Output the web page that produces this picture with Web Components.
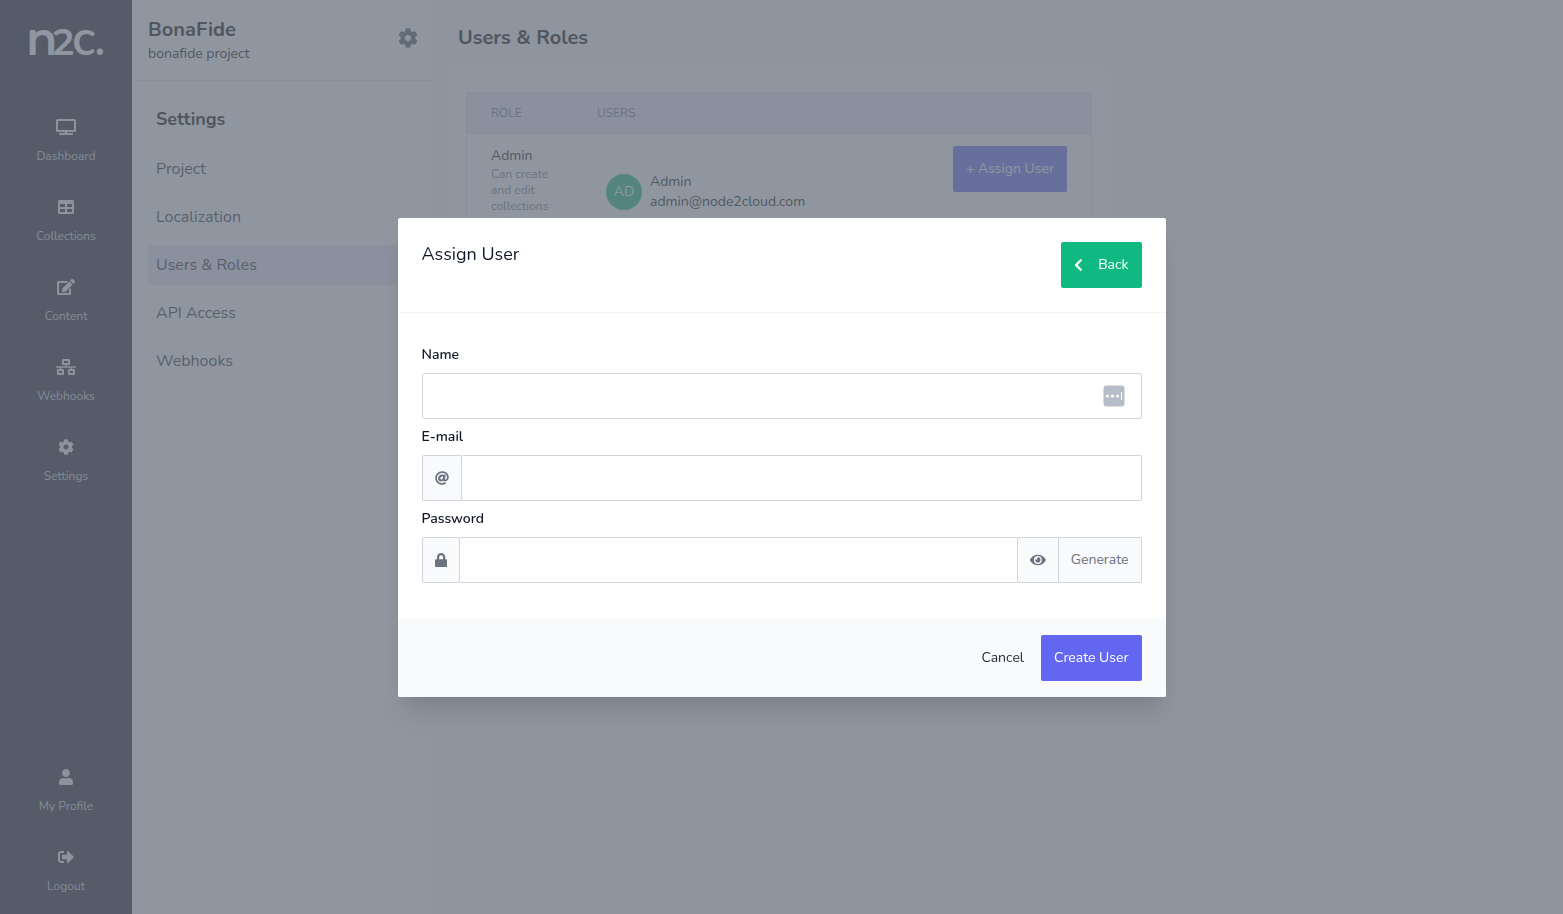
<!DOCTYPE html>
<html lang="en">
<head>
<meta charset="utf-8">
<meta name="viewport" content="width=device-width, initial-scale=1">
<title>Users &amp; Roles – BonaFide</title>
<style>
  body { margin: 0; font: 14px/20px Nunito, "Nunito Sans", Lato, Roboto, sans-serif; color: #000; background: #f9fafb; }
</style>
</head>
<body>
<app-shell>
  <main-menu slot="menu">
    <menu-item icon="tv">Dashboard</menu-item>
    <menu-item icon="table">Collections</menu-item>
    <menu-item icon="edit">Content</menu-item>
    <menu-item icon="network">Webhooks</menu-item>
    <menu-item icon="cog">Settings</menu-item>
    <menu-item slot="bottom" icon="user">My Profile</menu-item>
    <menu-item slot="bottom" icon="logout">Logout</menu-item>
  </main-menu>
  <project-panel slot="panel">
    <span slot="name">BonaFide</span>
    <span slot="description">bonafide project</span>
    <span slot="section">Settings</span>
    <panel-link>Project</panel-link>
    <panel-link>Localization</panel-link>
    <panel-link active>Users &amp; Roles</panel-link>
    <panel-link>API Access</panel-link>
    <panel-link>Webhooks</panel-link>
  </project-panel>
  <roles-page></roles-page>
</app-shell>
<modal-dialog>
  <span slot="title">Assign User</span>
  <app-button slot="action" variant="success" icon="chevron">Back</app-button>
  <form-field label="Name" type="text" manager></form-field>
  <form-field label="E-mail" type="email" prefix="at"></form-field>
  <form-field label="Password" type="password" prefix="lock" generate></form-field>
  <app-button slot="footer" variant="plain">Cancel</app-button>
  <app-button slot="footer" variant="primary">Create User</app-button>
</modal-dialog>
<script>
const ICONS = {
  tv: [640, 'M592 0H48A48 48 0 0 0 0 48v320a48 48 0 0 0 48 48h240v32H112a16 16 0 0 0-16 16v32a16 16 0 0 0 16 16h416a16 16 0 0 0 16-16v-32a16 16 0 0 0-16-16H352v-32h240a48 48 0 0 0 48-48V48a48 48 0 0 0-48-48zm-16 352H64V64h512z'],
  table: [512, 'M464 32H48C21.49 32 0 53.49 0 80v352c0 26.51 21.49 48 48 48h416c26.51 0 48-21.49 48-48V80c0-26.51-21.49-48-48-48zM224 416H64v-96h160v96zm0-160H64v-96h160v96zm224 160H288v-96h160v96zm0-160H288v-96h160v96z'],
  edit: [576, 'M402.6 83.2l90.2 90.2c3.8 3.8 3.8 10 0 13.8L274.4 405.6l-92.8 10.3c-12.4 1.4-22.9-9.1-21.5-21.5l10.3-92.8L388.8 83.2c3.8-3.8 10-3.8 13.8 0zm162-22.9l-48.8-48.8c-15.2-15.2-39.9-15.2-55.2 0l-35.4 35.4c-3.8 3.8-3.8 10 0 13.8l90.2 90.2c3.8 3.8 10 3.8 13.8 0l35.4-35.4c15.2-15.3 15.2-40 0-55.2zM384 346.2V448H64V128h229.8c3.2 0 6.2-1.3 8.5-3.5l40-40c7.6-7.6 2.2-20.5-8.5-20.5H48C21.5 64 0 85.5 0 112v352c0 26.5 21.5 48 48 48h352c26.5 0 48-21.5 48-48V306.2c0-10.7-12.9-16-20.5-8.5l-40 40c-2.2 2.3-3.5 5.3-3.5 8.5z'],
  network: [640, 'M640 264v-16c0-8.84-7.16-16-16-16H344v-40h72c17.67 0 32-14.33 32-32V32c0-17.67-14.33-32-32-32H224c-17.67 0-32 14.33-32 32v128c0 17.67 14.33 32 32 32h72v40H16c-8.84 0-16 7.16-16 16v16c0 8.84 7.16 16 16 16h104v40H64c-17.67 0-32 14.33-32 32v128c0 17.67 14.33 32 32 32h160c17.67 0 32-14.33 32-32V352c0-17.67-14.33-32-32-32h-56v-40h304v40h-56c-17.67 0-32 14.33-32 32v128c0 17.67 14.33 32 32 32h160c17.67 0 32-14.33 32-32V352c0-17.67-14.33-32-32-32h-56v-40h104c8.84 0 16-7.16 16-16zM256 128V64h128v64H256zm-64 320H96v-64h96v64zm352 0h-96v-64h96v64z'],
  cog: [512, 'M487.4 315.7l-42.6-24.6c4.3-23.2 4.3-47 0-70.2l42.6-24.6c4.9-2.8 7.1-8.6 5.5-14-11.1-35.6-30-67.8-54.7-94.6-3.8-4.1-10-5.1-14.8-2.3L380.8 110c-17.9-15.4-38.5-27.3-60.8-35.1V25.8c0-5.6-3.9-10.5-9.4-11.7-36.7-8.2-74.3-7.8-109.2 0-5.5 1.2-9.4 6.1-9.4 11.7V75c-22.2 7.9-42.8 19.8-60.8 35.1L88.7 85.5c-4.9-2.8-11-1.9-14.8 2.3-24.7 26.7-43.6 58.9-54.7 94.6-1.7 5.4.6 11.2 5.5 14L67.3 221c-4.3 23.2-4.3 47 0 70.2l-42.6 24.6c-4.9 2.8-7.1 8.6-5.5 14 11.1 35.6 30 67.8 54.7 94.6 3.8 4.1 10 5.1 14.8 2.3l42.6-24.6c17.9 15.4 38.5 27.3 60.8 35.1v49.2c0 5.6 3.9 10.5 9.4 11.7 36.7 8.2 74.3 7.8 109.2 0 5.5-1.2 9.4-6.1 9.4-11.7v-49.2c22.2-7.9 42.8-19.8 60.8-35.1l42.6 24.6c4.9 2.8 11 1.9 14.8-2.3 24.7-26.7 43.6-58.9 54.7-94.6 1.5-5.5-.7-11.3-5.6-14.1zM256 336c-44.1 0-80-35.9-80-80s35.9-80 80-80 80 35.9 80 80-35.9 80-80 80z'],
  user: [448, 'M224 256c70.7 0 128-57.3 128-128S294.7 0 224 0 96 57.3 96 128s57.3 128 128 128zm89.6 32h-16.7c-22.2 10.2-46.9 16-72.9 16s-50.6-5.8-72.9-16h-16.7C60.2 288 0 348.2 0 422.4V464c0 26.5 21.5 48 48 48h352c26.5 0 48-21.5 48-48v-41.6c0-74.2-60.2-134.4-134.4-134.4z'],
  logout: [512, 'M497 273L329 441c-15 15-41 4.5-41-17v-96H152c-13.3 0-24-10.7-24-24v-96c0-13.3 10.7-24 24-24h136V88c0-21.4 25.9-32 41-17l168 168c9.3 9.4 9.3 24.6 0 34zM192 436v-40c0-6.6-5.4-12-12-12H96c-17.7 0-32-14.3-32-32V160c0-17.7 14.3-32 32-32h84c6.6 0 12-5.4 12-12V76c0-6.6-5.4-12-12-12H96c-53 0-96 43-96 96v192c0 53 43 96 96 96h84c6.6 0 12-5.4 12-12z'],
  chevron: [320, 'M34.52 239.03L228.87 44.69c9.37-9.37 24.57-9.37 33.94 0l22.67 22.67c9.36 9.36 9.37 24.52.04 33.9L131.49 256l154.02 154.75c9.34 9.38 9.32 24.54-.04 33.9l-22.67 22.67c-9.37 9.37-24.57 9.37-33.94 0L34.52 272.97c-9.37-9.37-9.37-24.57 0-33.94z'],
  at: [512, 'M256 8C118.941 8 8 118.919 8 256c0 137.059 110.919 248 248 248 48.154 0 95.342-14.14 135.408-40.223 12.005-7.815 14.625-24.288 5.552-35.372l-10.177-12.433c-7.671-9.371-21.179-11.667-31.373-5.129C325.92 429.757 291.314 440 256 440c-101.458 0-184-82.542-184-184S154.542 72 256 72c100.139 0 184 57.619 184 160 0 38.786-21.093 79.742-58.17 83.693-17.349-.454-16.91-12.857-13.476-30.024l23.433-121.11C394.653 149.75 383.308 136 368.225 136h-44.981a13.518 13.518 0 0 0-13.432 11.993l-.01.092c-14.697-17.901-40.448-21.775-59.971-21.775-74.58 0-137.831 62.234-137.831 151.46 0 65.303 36.785 105.87 96 105.87 26.984 0 57.369-15.637 74.991-38.333 9.522 34.104 40.613 34.104 70.71 34.104C462.609 379.41 504 307.798 504 232 504 95.653 394.023 8 256 8zm-21.68 304.43c-22.249 0-36.07-15.623-36.07-40.771 0-44.993 30.779-72.729 58.63-72.729 22.292 0 35.601 15.241 35.601 40.77 0 45.061-33.875 72.73-58.161 72.73z'],
  lock: [448, 'M400 224h-24v-72C376 68.2 307.8 0 224 0S72 68.2 72 152v72H48c-26.5 0-48 21.5-48 48v192c0 26.5 21.5 48 48 48h352c26.5 0 48-21.5 48-48V272c0-26.5-21.5-48-48-48zm-104 0H152v-72c0-39.7 32.3-72 72-72s72 32.3 72 72v72z'],
  eye: [576, 'M572.52 241.4C518.29 135.59 410.93 64 288 64S57.68 135.64 3.48 241.41a32.35 32.35 0 0 0 0 29.19C57.71 376.41 165.07 448 288 448s230.32-71.64 284.52-177.41a32.35 32.35 0 0 0 0-29.19zM288 400a144 144 0 1 1 144-144 143.93 143.93 0 0 1-144 144zm0-240a95.31 95.31 0 0 0-25.31 3.79 47.85 47.85 0 0 1-66.9 66.9A95.78 95.78 0 1 0 288 160z']
};

/* Registers an element whose shadow root is filled from a template string. */
function define(tag, render) {
  customElements.define(tag, class extends HTMLElement {
    connectedCallback() {
      if (this.shadowRoot) return;
      const template = document.createElement('template');
      template.innerHTML = render(this);
      this.attachShadow({ mode: 'open' }).append(template.content.cloneNode(true));
    }
  });
}

define('app-icon', el => {
  const [width, path] = ICONS[el.getAttribute('name')];
  return `
  <style>
    :host { display: inline-flex; height: var(--icon-size, 16px); }
    svg { display: block; height: 100%; fill: currentColor; }
  </style>
  <svg viewBox="0 0 ${width} 512" aria-hidden="true"><path d="${path}"/></svg>`;
});

define('app-shell', () => `
  <style>
    :host { display: grid; grid-template-columns: 132px 302px minmax(0, 1fr); min-height: 100vh; }
    ::slotted(*) { min-width: 0; }
  </style>
  <slot name="menu"></slot><slot name="panel"></slot><slot></slot>`);

define('brand-logo', () => `
  <style>
    :host { display: block; }
    svg { display: block; overflow: visible; }
    text { fill: #fff; font-family: Montserrat, Nunito, Lato, sans-serif; font-weight: 600; font-size: 46px; }
    .digit { font-size: 36px; }
    .round { font-family: Nunito, Lato, sans-serif; font-size: 50px; }
  </style>
  <svg width="80" height="64" role="img" aria-label="n2c.">
    <text y="47"><tspan x="0">n</tspan><tspan x="27" class="digit">2</tspan><tspan x="46" class="round">c</tspan><tspan x="68" class="round">.</tspan></text>
  </svg>`);

define('main-menu', () => `
  <style>
    :host { display: flex; flex-direction: column; background: #1a1427; padding: 8px 0 3px; box-sizing: border-box; }
    brand-logo { align-self: center; }
    nav { display: flex; flex-direction: column; }
    .top { padding-top: 29px; flex: 1; }
  </style>
  <brand-logo></brand-logo>
  <nav class="top" aria-label="Main"><slot></slot></nav>
  <nav aria-label="Account"><slot name="bottom"></slot></nav>`);

define('menu-item', el => `
  <style>
    :host { display: block; }
    a { display: flex; flex-direction: column; align-items: center; gap: 10px; padding: 16px 8px;
        color: #d1d5db; text-decoration: none; font-size: 12px; line-height: 18px; }
    .icon { display: flex; align-items: center; height: 20px; color: #f3f4f6; }
  </style>
  <a href="#"><span class="icon"><app-icon name="${el.getAttribute('icon')}"></app-icon></span><slot></slot></a>`);

define('project-panel', () => `
  <style>
    :host { display: block; background: #fff; }
    header { display: flex; align-items: flex-start; justify-content: space-between; padding: 16px; border-bottom: 1px solid #e5e7eb; }
    h1, h2, p { margin: 0; }
    h1 { font-size: 20px; line-height: 28px; }
    h2 { font-size: 18px; line-height: 28px; padding: 0 8px 8px; }
    button { display: flex; border: 0; padding: 12px 0; background: none; color: #4b5563; --icon-size: 20px; }
    nav { display: flex; flex-direction: column; gap: 8px; padding: 24px 16px; }
  </style>
  <header>
    <div><h1><slot name="name"></slot></h1><p><slot name="description"></slot></p></div>
    <button aria-label="Project settings"><app-icon name="cog"></app-icon></button>
  </header>
  <nav aria-label="Settings"><h2><slot name="section"></slot></h2><slot></slot></nav>`);

define('panel-link', () => `
  <style>
    :host { display: block; border-radius: 4px; }
    :host([active]) { background: #ece6f5; }
    a { display: block; padding: 8px; font-size: 16px; line-height: 24px; color: #1f2937; text-decoration: none; }
  </style>
  <a href="#"><slot></slot></a>`);

define('app-button', el => `
  <style>
    :host { display: inline-block; }
    button { display: flex; align-items: center; gap: 15px; margin: 0; padding: 12px; border: 1px solid transparent; border-radius: 2px;
             font: inherit; font-size: 14px; line-height: 20px; color: #fff; white-space: nowrap; cursor: pointer; --icon-size: 14px; }
    .primary { background: #6366f1; }
    .success { background: #10b981; }
    .plain { background: none; color: #1f2937; }
  </style>
  <button type="button" class="${el.getAttribute('variant')}">${el.hasAttribute('icon') ? `<app-icon name="${el.getAttribute('icon')}"></app-icon>` : ''}<slot></slot></button>`);

define('user-chip', el => `
  <style>
    :host { display: inline-flex; align-items: center; gap: 8px; padding: 8px; border: 1px solid #f3f4f6; border-radius: 2px; }
    .avatar { display: flex; align-items: center; justify-content: center; width: 36px; height: 36px; border-radius: 50%; background: #10b981; color: #fff; }
    .mail { display: block; }
  </style>
  <span class="avatar">${el.getAttribute('initials')}</span>
  <span><slot></slot><span class="mail"><slot name="mail"></slot></span></span>`);

define('roles-page', () => `
  <style>
    :host { display: block; padding: 24px 16px; }
    h1 { margin: 0 0 16px; padding: 0 8px; font-size: 20px; line-height: 28px; }
    section { box-sizing: border-box; max-width: 658px; padding: 24px 16px; background: #fff; border-radius: 4px; }
    table { width: 100%; border-collapse: separate; border-spacing: 0; border: 1px solid #e2deea; }
    th { padding: 12px 24px; background: #ece6f5; border-bottom: 1px solid #e2deea; text-align: left;
         font-size: 12px; line-height: 16px; font-weight: 400; color: #6b7280; text-transform: uppercase; }
    td { padding: 12px 24px; vertical-align: top; }
    td:first-child { width: 58px; }
    td:nth-child(2) { padding-top: 29px; }
    td:last-child { text-align: right; }
    p { margin: 0; font-size: 12px; line-height: 16px; color: #6b7280; }
  </style>
  <h1>Users &amp; Roles</h1>
  <section>
    <table>
      <thead><tr><th>Role</th><th>Users</th><th></th></tr></thead>
      <tbody><tr>
        <td>Admin<p>Can create and edit collections and</p></td>
        <td><user-chip initials="AD">Admin<span slot="mail">admin@node2cloud.com</span></user-chip></td>
        <td><app-button variant="primary">+ Assign User</app-button></td>
      </tr></tbody>
    </table>
  </section>`);

define('modal-dialog', () => `
  <style>
    :host { position: fixed; inset: 0; display: flex; align-items: center; justify-content: center; background: rgba(106, 115, 127, .75); }
    [role=dialog] { width: 100%; max-width: 768px; background: #fff; border-radius: 2px; overflow: hidden; color: #111827;
      box-shadow: 0 20px 25px -5px rgba(0, 0, 0, .1), 0 10px 10px -5px rgba(0, 0, 0, .04); }
    header { display: flex; justify-content: space-between; align-items: flex-start; padding: 24px; border-bottom: 1px solid #f3f4f6; }
    h2 { margin: 0; font-size: 18px; line-height: 24px; font-weight: 400; }
    form { display: flex; flex-direction: column; gap: 8px; padding: 32px 24px 36px; }
    footer { display: flex; justify-content: flex-end; gap: 4px; padding: 16px 24px; background: #f9fafb; }
  </style>
  <div role="dialog" aria-modal="true" aria-labelledby="title">
    <header><h2 id="title"><slot name="title"></slot></h2><slot name="action"></slot></header>
    <form><slot></slot></form>
    <footer><slot name="footer"></slot></footer>
  </div>`);

define('form-field', el => `
  <style>
    :host { display: flex; flex-direction: column; gap: 8px; }
    label { font-weight: 600; }
    .group { display: flex; position: relative; }
    input { flex: 1; min-width: 0; box-sizing: border-box; height: 46px; margin: 0; padding: 12px; border: 1px solid #d1d5db; border-radius: 2px;
            background: #fff; font: inherit; outline: 0; }
    .addon { display: flex; align-items: center; padding: 12px; border: 1px solid #d1d5db; border-radius: 2px; background: #f9fafb;
             color: #6b7280; font: inherit; margin: 0; box-sizing: border-box; height: 46px; --icon-size: 14px; }
    .addon + *, input + .addon { margin-left: -1px; }
    .manager { position: absolute; right: 17px; top: 12px; display: block; }
  </style>
  <label for="field">${el.getAttribute('label')}</label>
  <div class="group">
    ${el.getAttribute('prefix') ? `<span class="addon"><app-icon name="${el.getAttribute('prefix')}"></app-icon></span>` : ''}
    <input id="field" type="${el.getAttribute('type')}" autocomplete="off">
    ${el.hasAttribute('generate') ? `<button type="button" class="addon" aria-label="Show password"><app-icon name="eye"></app-icon></button><button type="button" class="addon">Generate</button>` : ''}
    ${el.hasAttribute('manager') ? `<svg class="manager" width="22" height="22" viewBox="0 0 22 22" aria-hidden="true"><rect x=".5" y=".5" width="21" height="21" rx="3" fill="#b6bdc9"/><g fill="#fff"><circle cx="4.5" cy="11" r="1.6"/><circle cx="9.5" cy="11" r="1.6"/><circle cx="14.5" cy="11" r="1.6"/><path d="M18 7h1v8h-1z"/></g></svg>` : ''}
  </div>`);
</script>
</body>
</html>
